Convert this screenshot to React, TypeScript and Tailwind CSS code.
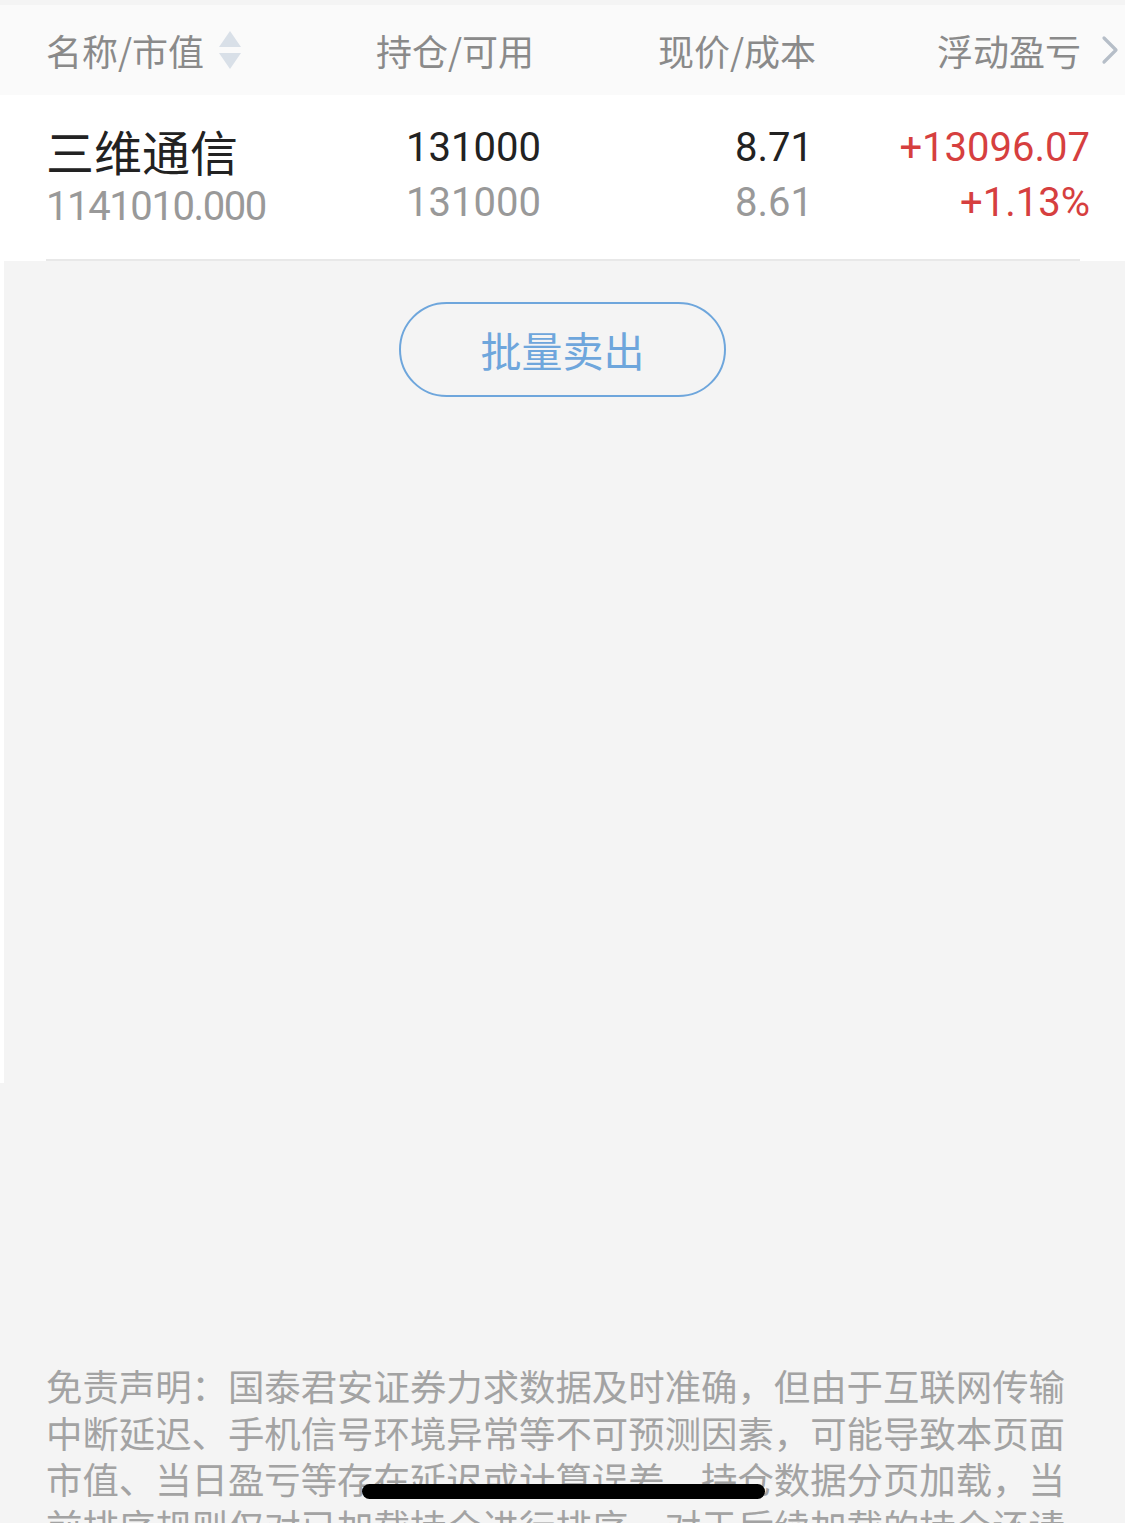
import React from 'react'

const cjk = "font-['Noto_Sans_CJK_SC',sans-serif]"
const num = "font-['Roboto','Noto_Sans_CJK_SC',sans-serif] font-normal"

function SortIcon() {
  return (
    <svg width="24" height="38" viewBox="0 0 24 38" className="ml-[14px]">
      <path d="M12 0 L23 16 L1 16 Z" fill="#d9e0e8" />
      <path d="M1 22 L23 22 L12 38 Z" fill="#d9e0e8" />
    </svg>
  )
}

function Chevron() {
  return (
    <svg width="18" height="30" viewBox="0 0 18 30" className="ml-[20px]">
      <path
        d="M3 3 L15 15 L3 27"
        fill="none"
        stroke="#b6bec8"
        strokeWidth="3.2"
        strokeLinecap="round"
        strokeLinejoin="round"
      />
    </svg>
  )
}

type Holding = {
  name: string
  marketValue: string
  position: string
  available: string
  price: string
  cost: string
  profit: string
  profitRate: string
}

const holding: Holding = {
  name: '三维通信',
  marketValue: '1141010.000',
  position: '131000',
  available: '131000',
  price: '8.71',
  cost: '8.61',
  profit: '+13096.07',
  profitRate: '+1.13%',
}

export default function App() {
  return (
    <div className={`relative h-[1523px] w-[1125px] overflow-hidden bg-[#f4f4f4] ${cjk}`}>
      <div className="h-[5px]" />

      {/* 表头 */}
      <div className="flex h-[90px] items-center bg-[#fafafa] pl-[46px] text-[36px] text-[#8a8a8a]">
        <div className="flex w-[330px] items-center">
          <span>名称/市值</span>
          <SortIcon />
        </div>
        <div className="w-[282px]">持仓/可用</div>
        <div className="w-[279px]">现价/成本</div>
        <div className="flex items-center">
          <span>浮动盈亏</span>
          <Chevron />
        </div>
      </div>

      {/* 持仓行 */}
      <div className="flex h-[164px] bg-white pl-[46px]">
        <div className="w-[330px] pt-[27px]">
          <div className="text-[48px] leading-[56px] text-[#222]">{holding.name}</div>
          <div className={`${num} mt-[7px] text-[40px] leading-[44px] tracking-[-1.4px] text-[#999]`}>
            {holding.marketValue}
          </div>
        </div>
        <div className={`${num} w-[165px] pt-[25px] text-right text-[40px] leading-[55px]`}>
          <div className="text-[#222]">{holding.position}</div>
          <div className="text-[#999]">{holding.available}</div>
        </div>
        <div className={`${num} w-[272px] pt-[25px] text-right text-[40px] leading-[55px]`}>
          <div className="text-[#222]">{holding.price}</div>
          <div className="text-[#999]">{holding.cost}</div>
        </div>
        <div className={`${num} w-[277px] pt-[25px] text-right text-[40px] leading-[55px] text-[#d63f3f]`}>
          <div>{holding.profit}</div>
          <div>{holding.profitRate}</div>
        </div>
      </div>
      <div className="bg-white pl-[46px] pr-[45px]">
        <div className="h-[2px] bg-[#e8e8e8]" />
      </div>

      {/* 操作区 */}
      <div className="h-[822px] border-l-[4px] border-white pr-[4px] pt-[41px]">
        <div className="flex justify-center">
          <button
            type="button"
            className="flex h-[95px] w-[327px] items-center justify-center rounded-full border-2 border-[#6ea6dc] text-[41px] text-[#6ea6dc]"
          >
            批量卖出
          </button>
        </div>
      </div>

      {/* 免责声明 */}
      <p className="ml-[46px] mt-[279px] w-[1030px] text-[36.4px] leading-[46.5px] text-[#a3a3a3]">
        免责声明：国泰君安证券力求数据及时准确，但由于互联网传输中断延迟、手机信号环境异常等不可预测因素，可能导致本页面市值、当日盈亏等存在延迟或计算误差，持仓数据分页加载，当前排序规则仅对已加载持仓进行排序，对于后续加载的持仓还请以实际为准。
      </p>

      <div className="absolute left-[362px] top-[1484px] h-[15px] w-[403px] rounded-full bg-black" />
    </div>
  )
}
